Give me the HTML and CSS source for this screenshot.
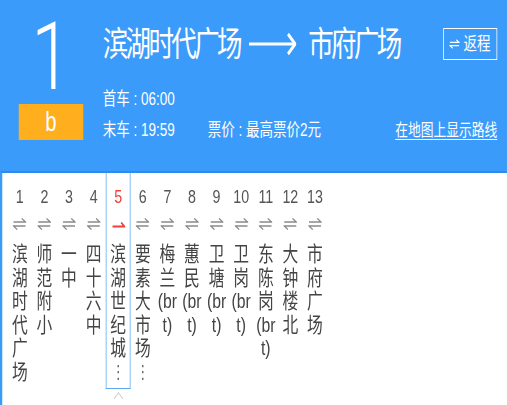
FILE: index.html
```html
<!DOCTYPE html>
<html lang="zh-CN">
<head>
<meta charset="utf-8">
<title>1路 线路详情</title>
<link rel="stylesheet" href="styles.css">
</head>
<body>
<div class="frame">
<div class="page">
  <header class="head">
    <div class="line-id">
      <div class="line-num">1</div>
      <div class="line-badge">b</div>
    </div>
    <div class="head-main">
      <div class="title-row">
        <h1 class="title">
          <span class="title-text">滨湖时代广场</span>
          <svg class="title-arrow" viewBox="0 0 63 24" width="63" height="24" aria-hidden="true">
            <line x1="0" y1="12" x2="61" y2="12" stroke="#fff" stroke-width="3"/>
            <polyline points="52,2 61.5,12 52,22" fill="none" stroke="#fff" stroke-width="3.5"/>
          </svg>
          <span class="title-text">市府广场</span>
        </h1>
        <button class="return" type="button">
          <svg class="swap" viewBox="0 0 18 12" width="18" height="12" aria-hidden="true">
            <path d="M1 4H17L12 0.5M17 8H1L6 11.5" fill="none" stroke="#fff" stroke-width="1.6"/>
          </svg>
          <span>返程</span>
        </button>
      </div>
      <div class="info-row">首车 : 06:00</div>
      <div class="info-row info-split">
        <span>末车 : 19:59</span>
        <span class="fare">票价 : 最高票价2元</span>
        <a class="map-link" href="#">在地图上显示路线</a>
      </div>
    </div>
  </header>

  <section class="stops">
    <ol class="stop-list">
      <li class="stop"><span class="stop-no">1</span><svg class="dir" viewBox="0 0 18 12" aria-hidden="true"><path d="M1 4H17L12 0.5M17 8H1L6 11.5"/></svg><span class="stop-name"><span>滨</span><span>湖</span><span>时</span><span>代</span><span>广</span><span>场</span></span></li>
      <li class="stop"><span class="stop-no">2</span><svg class="dir" viewBox="0 0 18 12" aria-hidden="true"><path d="M1 4H17L12 0.5M17 8H1L6 11.5"/></svg><span class="stop-name"><span>师</span><span>范</span><span>附</span><span>小</span></span></li>
      <li class="stop"><span class="stop-no">3</span><svg class="dir" viewBox="0 0 18 12" aria-hidden="true"><path d="M1 4H17L12 0.5M17 8H1L6 11.5"/></svg><span class="stop-name"><span>一</span><span>中</span></span></li>
      <li class="stop"><span class="stop-no">4</span><svg class="dir" viewBox="0 0 18 12" aria-hidden="true"><path d="M1 4H17L12 0.5M17 8H1L6 11.5"/></svg><span class="stop-name"><span>四</span><span>十</span><span>六</span><span>中</span></span></li>
      <li class="stop current"><span class="stop-no">5</span><svg class="dir dir-on" viewBox="0 0 18 12" aria-hidden="true"><path d="M1 8.5H17L12.5 4.5"/></svg><span class="stop-name"><span>滨</span><span>湖</span><span>世</span><span>纪</span><span>城</span><span class="more">⋮</span></span></li>
      <li class="stop"><span class="stop-no">6</span><svg class="dir" viewBox="0 0 18 12" aria-hidden="true"><path d="M1 4H17L12 0.5M17 8H1L6 11.5"/></svg><span class="stop-name"><span>要</span><span>素</span><span>大</span><span>市</span><span>场</span><span class="more">⋮</span></span></li>
      <li class="stop"><span class="stop-no">7</span><svg class="dir" viewBox="0 0 18 12" aria-hidden="true"><path d="M1 4H17L12 0.5M17 8H1L6 11.5"/></svg><span class="stop-name"><span>梅</span><span>兰</span><span>(br</span><span>t)</span></span></li>
      <li class="stop"><span class="stop-no">8</span><svg class="dir" viewBox="0 0 18 12" aria-hidden="true"><path d="M1 4H17L12 0.5M17 8H1L6 11.5"/></svg><span class="stop-name"><span>蕙</span><span>民</span><span>(br</span><span>t)</span></span></li>
      <li class="stop"><span class="stop-no">9</span><svg class="dir" viewBox="0 0 18 12" aria-hidden="true"><path d="M1 4H17L12 0.5M17 8H1L6 11.5"/></svg><span class="stop-name"><span>卫</span><span>塘</span><span>(br</span><span>t)</span></span></li>
      <li class="stop"><span class="stop-no">10</span><svg class="dir" viewBox="0 0 18 12" aria-hidden="true"><path d="M1 4H17L12 0.5M17 8H1L6 11.5"/></svg><span class="stop-name"><span>卫</span><span>岗</span><span>(br</span><span>t)</span></span></li>
      <li class="stop"><span class="stop-no">11</span><svg class="dir" viewBox="0 0 18 12" aria-hidden="true"><path d="M1 4H17L12 0.5M17 8H1L6 11.5"/></svg><span class="stop-name"><span>东</span><span>陈</span><span>岗</span><span>(br</span><span>t)</span></span></li>
      <li class="stop"><span class="stop-no">12</span><svg class="dir" viewBox="0 0 18 12" aria-hidden="true"><path d="M1 4H17L12 0.5M17 8H1L6 11.5"/></svg><span class="stop-name"><span>大</span><span>钟</span><span>楼</span><span>北</span></span></li>
      <li class="stop"><span class="stop-no">13</span><svg class="dir" viewBox="0 0 18 12" aria-hidden="true"><path d="M1 4H17L12 0.5M17 8H1L6 11.5"/></svg><span class="stop-name"><span>市</span><span>府</span><span>广</span><span>场</span></span></li>
    </ol>
  </section>
</div>
</div>
</body>
</html>
```

FILE: styles.css
```css
html, body {
  margin: 0;
  padding: 0;
  background: #ffffff;
  overflow: hidden;
}

body {
  width: 507px;
  height: 405px;
}

.frame {
  width: 507px;
  height: 405px;
  overflow: hidden;
}

/* The whole page is drawn in a narrow (horizontally condensed) face */
.page {
  width: 676px;
  height: 405px;
  transform: scaleX(0.75);
  transform-origin: 0 0;
  font-family: "Liberation Sans", "Noto Sans CJK SC", sans-serif;
}

/* ---------- header ---------- */
.head {
  display: flex;
  height: 171px;
  background: #3a9bfb;
  color: #ffffff;
}

.line-id {
  width: 86px;
  margin-left: 25px;
  padding-top: 12px;
  display: flex;
  flex-direction: column;
  align-items: center;
}

.line-num {
  font-family: "Roboto", "Liberation Sans", sans-serif;
  font-weight: 300;
  font-size: 94px;
  line-height: 91px;
  height: 91px;
}

.line-badge {
  align-self: stretch;
  height: 36px;
  margin-top: 1px;
  background: #ffae1e;
  font-size: 27px;
  line-height: 36px;
  text-align: center;
}

.head-main {
  flex: 1;
  margin-left: 26px;
  margin-right: 13px;
  padding-top: 24px;
}

.title-row {
  display: flex;
  justify-content: space-between;
  align-items: flex-start;
  height: 60px;
}

.title {
  margin: 0;
  display: flex;
  align-items: center;
  font-size: 34px;
  font-weight: 400;
  line-height: 40px;
  letter-spacing: -3.5px;
}

.title-arrow {
  width: 63px;
  height: 24px;
  margin: 0 16px 0 12px;
}

.return {
  display: flex;
  align-items: center;
  gap: 5px;
  width: 72px;
  height: 32px;
  margin-top: 4px;
  padding: 0 0 0 7px;
  border: 1.5px solid #ffffff;
  background: transparent;
  color: #ffffff;
  font-family: inherit;
  font-size: 18px;
  line-height: 1;
}

.swap {
  width: 14px;
  height: 12px;
}

.info-row {
  font-size: 18px;
  line-height: 31px;
  height: 31px;
}

.info-split {
  display: flex;
  gap: 44px;
}

.map-link {
  margin-left: auto;
  color: #ffffff;
  font-size: 17px;
  text-decoration: underline;
  text-underline-offset: 3px;
}

/* ---------- stop list ---------- */
.stops {
  height: 232px;
  border-top: 2px solid #2b8cf0;
  border-left: 3px solid #3a9bfb;
}

.stop-list {
  display: flex;
  margin: 0;
  padding: 0 0 0 7px;
  list-style: none;
}

.stop {
  position: relative;
  box-sizing: border-box;
  width: 32.8px;
  height: 216px;
  display: flex;
  flex-direction: column;
  align-items: center;
  border: 1.33px solid transparent;
  border-top: 0;
}

.stop.current {
  border-color: #5fa8f4;
}

.stop.current::after {
  content: "";
  position: absolute;
  left: 50%;
  top: calc(100% + 6px);
  width: 8px;
  height: 8px;
  border-left: 1.6px solid #c4c4c4;
  border-top: 1.6px solid #c4c4c4;
  transform: translateX(-50%) rotate(45deg);
  transform-origin: 50% 50%;
}

.stop-no {
  margin-top: 14px;
  font-size: 19px;
  line-height: 19px;
  height: 19px;
  color: #555555;
}

.current .stop-no {
  color: #f2403a;
}

.dir {
  width: 18px;
  height: 12px;
  margin-top: 12px;
  fill: none;
  stroke: #8a8a8a;
  stroke-width: 1.5;
}

.dir-on {
  stroke: #f2403a;
  stroke-width: 2;
}

.stop-name {
  margin-top: 12px;
  display: flex;
  flex-direction: column;
  align-items: center;
  font-size: 21px;
  line-height: 23.5px;
  color: #444444;
}

.more {
  font-family: "DejaVu Sans", sans-serif;
  font-size: 18px;
  color: #666666;
}
```
